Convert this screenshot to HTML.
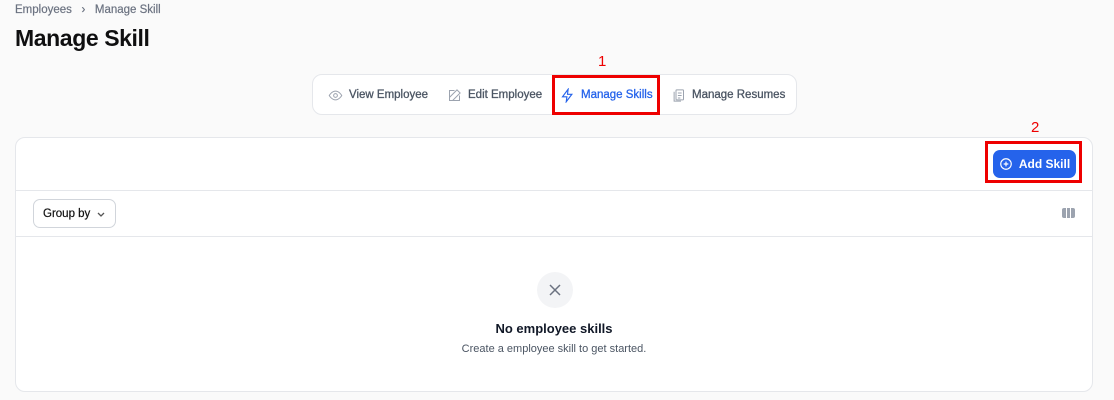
<!DOCTYPE html>
<html><head><style>
*{box-sizing:border-box;margin:0;padding:0}
body{width:1114px;height:400px;background:#fafafa;font-family:"Liberation Sans",sans-serif;position:relative;overflow:hidden;color:#111827}
.abs{position:absolute}
.bc{left:15px;top:4px;font-size:11.5px;color:#6b7280;-webkit-text-stroke:0.2px}
h1{position:absolute;left:15px;top:25px;font-size:23px;font-weight:bold;letter-spacing:-0.4px;color:#0f0f10}
.tabs{left:312px;top:74px;width:485px;height:41px;background:#fff;border:1px solid #e5e7eb;border-radius:10px}
.tab{position:absolute;top:1px;height:39px;line-height:39px;font-size:11.5px;color:#4b5563;display:flex;align-items:center;gap:6px;white-space:nowrap;-webkit-text-stroke:0.3px}
.card{left:15px;top:137px;width:1078px;height:255px;background:#fff;border:1px solid #e5e7eb;border-radius:10px}
.red{border:3px solid #e00;position:absolute}
.num{color:#e00;font-size:15px;position:absolute}
</style></head><body>
<div class="abs bc">Employees &nbsp;&nbsp;›&nbsp;&nbsp; Manage Skill</div>
<h1>Manage Skill</h1>
<div class="abs tabs">
 <div class="tab" style="left:15px"><svg width="15" height="15" viewBox="0 0 24 24" fill="none" stroke="#9ca3af" stroke-width="1.6"><path d="M2 12s4-7 10-7 10 7 10 7-4 7-10 7S2 12 2 12z"/><circle cx="12" cy="12" r="3"/></svg>View Employee</div>
 <div class="tab" style="left:134px"><svg width="15" height="15" viewBox="0 0 24 24" fill="none" stroke="#9ca3af" stroke-width="1.6"><path d="M16 3l5 5L9 20H4v-5z"/><path d="M12 4H4v16h16v-8"/></svg>Edit Employee</div>
 <div class="tab" style="left:247px;color:#2563eb"><svg width="15" height="15" viewBox="0 0 24 24" fill="none" stroke="#2563eb" stroke-width="1.8"><path d="M13 2L4 14h7l-1 8 9-12h-7z"/></svg>Manage Skills</div>
 <div class="tab" style="left:358px"><svg width="15" height="15" viewBox="0 0 24 24" fill="none" stroke="#9ca3af" stroke-width="1.6"><rect x="8" y="3" width="12" height="16" rx="1"/><path d="M5 6v15h11"/><path d="M11 8h6M11 12h6M11 16h4"/></svg>Manage Resumes</div>
</div>
<div class="red" style="left:552px;top:75px;width:108px;height:40px"></div>
<div class="num" style="left:598px;top:53px">1</div>
<div class="abs card">
 <div class="abs" style="left:0;right:0;top:52px;border-top:1px solid #e5e7eb"></div>
 <div class="abs" style="left:0;right:0;top:98px;border-top:1px solid #e5e7eb"></div>
 <div class="abs" style="left:977px;top:12px;width:83px;height:28px;background:#2563eb;border-radius:7px;color:#fff;font-size:12px;font-weight:bold;display:flex;align-items:center;justify-content:center;gap:6px"><svg width="14" height="14" viewBox="0 0 24 24" fill="none" stroke="#fff" stroke-width="2"><circle cx="12" cy="12" r="9"/><path d="M12 8v8M8 12h8"/></svg>Add Skill</div>
 <div class="abs" style="left:17px;top:61px;width:83px;height:29px;border:1px solid #d1d5db;border-radius:7px;font-size:11.5px;color:#111;display:flex;align-items:center;padding-left:9px;gap:6px;-webkit-text-stroke:0.2px">Group by <svg width="10" height="10" viewBox="0 0 10 10" fill="none" stroke="#555" stroke-width="1.3"><path d="M2 4l3 3 3-3"/></svg></div>
 <div class="abs" style="left:1046px;top:70px;width:13px;height:10px;display:flex;gap:1px"><div style="flex:1;background:#9ca3af;border-radius:2px 0 0 2px"></div><div style="flex:1;background:#9ca3af"></div><div style="flex:1;background:#9ca3af;border-radius:0 2px 2px 0"></div></div>
 <div class="abs" style="left:521px;top:134px;width:36px;height:36px;border-radius:50%;background:#f3f4f6;display:flex;align-items:center;justify-content:center"><svg width="14" height="14" viewBox="0 0 14 14" stroke="#6b7280" stroke-width="1.5"><path d="M2 2l10 10M12 2L2 12"/></svg></div>
 <div class="abs" style="left:0;right:0;top:183px;text-align:center;font-size:13px;font-weight:bold">No employee skills</div>
 <div class="abs" style="left:0;right:0;top:205px;text-align:center;font-size:11px;color:#4b5563">Create a employee skill to get started.</div>
</div>
<div class="red" style="left:985px;top:141px;width:97px;height:42px"></div>
<div class="num" style="left:1031px;top:119px">2</div>
</body></html>
